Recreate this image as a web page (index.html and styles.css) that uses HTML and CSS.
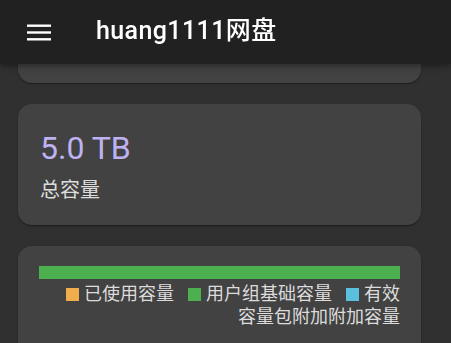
FILE: index.html
```html
<!DOCTYPE html>
<html lang="zh">
<head>
<meta charset="utf-8">
<title>huang1111网盘</title>
<link rel="stylesheet" href="styles.css">
</head>
<body>
<header class="appbar">
  <button class="menu-btn" aria-label="menu">
    <svg width="24" height="17" viewBox="0 0 24 17" aria-hidden="true">
      <rect x="0" y="0.5" width="24" height="2.4" fill="#fff"/>
      <rect x="0" y="7.3" width="24" height="2.4" fill="#fff"/>
      <rect x="0" y="14.1" width="24" height="2.4" fill="#fff"/>
    </svg>
  </button>
  <h1 class="title">huang1111网盘</h1>
</header>
<main class="content">
  <section class="card card-top"></section>
  <section class="card card-total">
    <div class="total-value">5.0 TB</div>
    <div class="total-label">总容量</div>
  </section>
  <section class="card card-usage">
    <div class="bar"><div class="bar-fill" style="width:100%"></div></div>
    <div class="legend"><span class="sw sw-used"></span>已使用容量<span class="sw sw-base sw-gap"></span>用户组基础容量<span class="sw sw-pack sw-gap"></span>有效容量包附加附加容量</div>
  </section>
</main>
</body>
</html>
```
FILE: styles.css
```css
* { box-sizing: border-box; }
html, body {
  margin: 0;
  padding: 0;
  background: #303030;
  height: 100%;
  overflow: hidden;
}
body {
  font-family: Roboto, "Noto Sans CJK SC", "Noto Sans", sans-serif;
  color: #fff;
}
.appbar {
  position: fixed;
  top: 0;
  left: 0;
  right: 0;
  height: 64px;
  background: #212121;
  display: flex;
  align-items: center;
  z-index: 10;
  box-shadow: 0 2px 4px -1px rgba(0,0,0,0.2), 0 4px 5px 0 rgba(0,0,0,0.14), 0 1px 10px 0 rgba(0,0,0,0.12);
}
.menu-btn {
  background: none;
  border: 0;
  padding: 0;
  margin: 0 0 0 27px;
  width: 24px;
  height: 17px;
  display: flex;
}
.title {
  margin: 0 0 0 45px;
  font-size: 25px;
  font-weight: 500;
  letter-spacing: 0.4px;
  line-height: 1;
  padding-bottom: 3px;
}
.content {
  padding: 0 30px 0 18px;
  display: flex;
  flex-direction: column;
  gap: 21px;
  width: 451px;
}
.card {
  background: #424242;
  border-radius: 14px;
  box-shadow: 0 2px 1px -1px rgba(0,0,0,0.2), 0 1px 1px 0 rgba(0,0,0,0.14), 0 1px 3px 0 rgba(0,0,0,0.12);
}
.card-top {
  height: 93px;
  margin-top: -10px;
}
.card-total {
  padding: 20px 22px 24px;
  height: 121px;
}
.total-value {
  font-size: 32px;
  line-height: 48px;
  color: #beb2f2;
  font-weight: 400;
}
.total-label {
  font-size: 20px;
  line-height: 28px;
  color: #dcdcdc;
  margin-top: 4px;
}
.card-usage {
  padding: 20px 21px 40px;
  height: 140px;
}
.bar {
  height: 13px;
  background: #2e7d32;
}
.bar-fill {
  height: 100%;
  background: #4caf50;
}
.legend {
  margin-left: auto;
  max-width: 340px;
  text-align: right;
  font-size: 18px;
  line-height: 23px;
  color: #dcdcdc;
  margin-top: 3px;
}
.sw {
  display: inline-block;
  width: 13px;
  height: 13px;
  margin-right: 5px;
  vertical-align: -1px;
}
.sw-gap { margin-left: 14px; }
.sw-used { background: #f0ad4e; }
.sw-base { background: #4caf50; }
.sw-pack { background: #5bc0de; }
```
